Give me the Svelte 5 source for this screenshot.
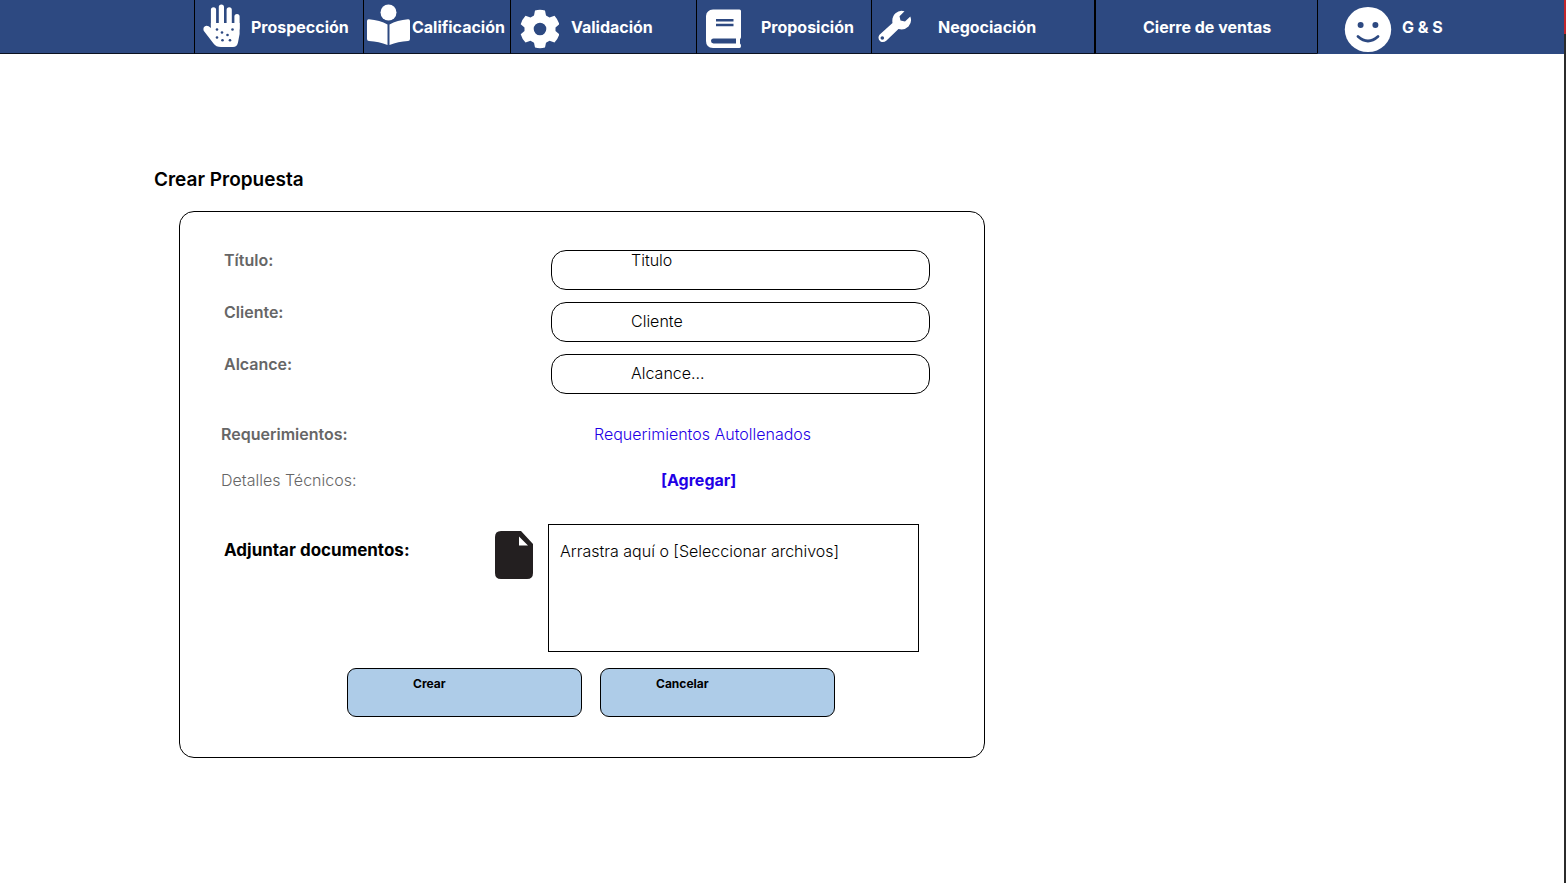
<script>
  const steps = [
    { id: 'prospeccion', label: 'Prospección', icon: 'hand', width: 46 },
    { id: 'calificacion', label: 'Calificación', icon: 'reader', width: 48 },
    { id: 'validacion', label: 'Validación', icon: 'gear', width: 48 },
    { id: 'proposicion', label: 'Proposición', icon: 'book', width: 44 },
    { id: 'negociacion', label: 'Negociación', icon: 'wrench', width: 40 },
    { id: 'cierre', label: 'Cierre de ventas', icon: null, width: 0 },
    { id: 'perfil', label: 'G & S', icon: 'smile', width: 74 }
  ];

  let titulo = $state('');
  let cliente = $state('');
  let alcance = $state('');
</script>

<div class="page">
  <div class="content">
    <nav>
      {#each steps as step}
        <a class={step.id} href="#{step.id}">
          {#if step.icon}
            <svg width={step.width} height="53" viewBox="0 0 {step.width} 53" aria-hidden="true">
              {#if step.icon === 'hand'}
                <g fill="none" stroke="#fff" stroke-width="5.2" stroke-linecap="round">
                  <path d="M18.500 26V9.800M26.400 26V7M34.200 26V9.800M42 28V16.500" />
                </g>
                <path fill="#fff" d="M15.900 23H44.600V34L43 42.500Q42 47 38 47H26Q21 47 18.500 43.500L8.700 30.800Q7.600 27.300 10.500 26Q13 25.300 15.900 28Z" />
                <g fill="#2d4981">
                  <circle cx="22" cy="29.500" r="1.300" /><circle cx="37.500" cy="29.500" r="1.300" />
                  <circle cx="27" cy="32.500" r="1.300" /><circle cx="32.500" cy="35" r="1.300" />
                  <circle cx="22" cy="37.500" r="1.300" /><circle cx="27.500" cy="40.300" r="1.300" />
                  <circle cx="35" cy="40.300" r="1.300" />
                </g>
              {:else if step.icon === 'reader'}
                <g fill="#fff" transform="translate(-1 0)">
                  <circle cx="25.500" cy="12.500" r="8" />
                  <path d="M4 21Q4 19 6 19.200Q17 20 24.500 24.500V45Q16 41.500 6 41Q4 40.800 4 39Z" />
                  <path d="M47 21Q47 19 45 19.200Q34 20 26.500 24.500V45Q35 41.500 45 41Q47 40.800 47 39Z" />
                </g>
              {:else if step.icon === 'gear'}
                <g transform="translate(29 29)" fill="#fff">
                  <path fill-rule="evenodd" d="M-5-18.500Q0-19.800 5-18.500L6-13.500L9.500-11.500L14.500-13.300Q18-9.500 19.300-4.800L15.500-1.500V2L19.300 5.300Q18 10 14.500 13.500L9.500 11.800L6 13.800L5 18.600Q0 19.900-5 18.600L-6 13.800L-9.500 11.800L-14.500 13.500Q-18 10-19.300 5.300L-15.500 2V-1.500L-19.300-4.800Q-18-9.500-14.500-13.300L-9.500-11.500L-6-13.500ZM0-6.300A6.300 6.300 0 1 0 0 6.300A6.300 6.300 0 1 0 0-6.300Z" />
                </g>
              {:else if step.icon === 'book'}
                <path fill="#fff" fill-rule="evenodd" d="M16 9.500H42.500Q44 9.500 44 11V37Q44 38.500 43 39V43.500Q44 44 44 46Q44 48 42.500 48H16Q9 47.500 9 41V16Q9.500 10 16 9.500ZM19 19V21.500H36.500V19ZM19 23.800V26.300H36.500V23.800ZM16.500 38.500A2.400 2.400 0 0 0 16.500 43.500H39V38.500Z" />
              {:else if step.icon === 'wrench'}
                <path fill="#fff" fill-rule="evenodd" d="M32.500 11.200L27.500 16.200L28.500 20.500L33 21.500L38.300 16.500Q40.500 22 36.500 26.500Q32.500 30.500 26.500 29L14.500 40.500Q11.500 43 8.500 41.500Q5 38.500 7.500 34.800L20.500 23Q19.500 17 23.500 13.200Q27.500 9.500 32.500 11.200ZM10.300 36.200A1.800 1.800 0 1 0 10.300 39.800A1.800 1.800 0 1 0 10.300 36.200Z" />
              {:else}
                <ellipse cx="50" cy="29.500" rx="23.200" ry="22.600" fill="#fff" />
                <circle cx="42.600" cy="25" r="3" fill="#2d4981" />
                <circle cx="57.400" cy="25" r="3" fill="#2d4981" />
                <path d="M40 36.500Q50 45.500 60 36.500" fill="none" stroke="#2d4981" stroke-width="2.800" stroke-linecap="round" />
              {/if}
            </svg>
          {/if}
          <span>{step.label}</span>
        </a>
      {/each}
    </nav>

    <main>
      <h1>Crear Propuesta</h1>
      <form>
        <div class="fields">
          <label for="titulo">Título:</label>
          <input id="titulo" class="raised" type="text" placeholder="Titulo" bind:value={titulo} />
          <label for="cliente">Cliente:</label>
          <input id="cliente" type="text" placeholder="Cliente" bind:value={cliente} />
          <label for="alcance">Alcance:</label>
          <input id="alcance" type="text" placeholder="Alcance..." bind:value={alcance} />
        </div>

        <dl>
          <dt class="strong">Requerimientos:</dt>
          <dd><a href="#requerimientos">Requerimientos Autollenados</a></dd>
          <dt>Detalles Técnicos:</dt>
          <dd><button type="button" class="add">[Agregar]</button></dd>
        </dl>

        <div class="attach">
          <h2>Adjuntar documentos:</h2>
          <svg width="38" height="48" viewBox="0 0 38 48" aria-hidden="true">
            <path fill="#231f20" fill-rule="evenodd" d="M6 0H26L38 13V42Q38 48 32 48H6Q0 48 0 42V6Q0 0 6 0ZM24 5.500V14.500H33Z" />
          </svg>
          <button type="button" class="drop">Arrastra aquí o [Seleccionar archivos]</button>
        </div>

        <div class="actions">
          <button type="button" class="create">Crear</button>
          <button type="button" class="cancel">Cancelar</button>
        </div>
      </form>
    </main>
  </div>
  <div class="edge"></div>
</div>

<style>
  :global(body) {
    margin: 0;
    background: #fff;
  }

  .page {
    display: flex;
    min-height: 100vh;
    font-family: Inter, sans-serif;
    font-size: 16px;
    line-height: 20px;
    color: #000;
  }

  .content {
    flex: 1;
    min-width: 0;
  }

  .edge {
    width: 2px;
    background: linear-gradient(#c1272d 34px, #2b2b2b 34px);
  }

  nav {
    display: grid;
    grid-template-columns: 169fr 147fr 186fr 175fr 223fr 223fr 247fr;
    padding-left: 12.4%;
    background: linear-gradient(#2d4981 53px, #0b1220 53px);
  }

  nav a {
    display: flex;
    align-items: center;
    box-sizing: border-box;
    height: 54px;
    border-left: 1px solid #000;
    border-bottom: 1px solid #0b1220;
    color: #fff;
    font-weight: 700;
    text-decoration: none;
    white-space: nowrap;
  }

  nav svg {
    flex: none;
  }

  .prospeccion {
    gap: 10px;
  }

  .calificacion {
    gap: 0;
  }

  .validacion {
    gap: 12px;
  }

  .proposicion {
    gap: 20px;
  }

  .negociacion {
    gap: 26px;
  }

  .cierre {
    padding-left: 47px;
    border-left-width: 2px;
  }

  .perfil {
    gap: 10px;
    border-bottom-color: #2d4981;
  }

  main {
    padding: 114px 24px 0 154px;
  }

  h1 {
    margin: 0;
    font-size: 19px;
    line-height: 24px;
    font-weight: 600;
  }

  form {
    box-sizing: border-box;
    max-width: 806px;
    margin: 19px 0 24px 25px;
    padding: 38px 54px 40px 44px;
    border: 1px solid #000;
    border-radius: 15px;
  }

  .fields {
    display: grid;
    grid-template-columns: 327px 1fr;
    row-gap: 12px;
  }

  label {
    color: #666;
    font-weight: 600;
  }

  input {
    box-sizing: border-box;
    width: 100%;
    height: 40px;
    padding: 0 16px 2px 79px;
    border: 1px solid #000;
    border-radius: 15px;
    background: #fff;
    color: #000;
    font: inherit;
    font-weight: 300;
  }

  .raised {
    padding-bottom: 20px;
  }

  input::placeholder {
    color: #000;
    opacity: 1;
  }

  dl {
    display: grid;
    grid-template-columns: 330px 1fr;
    row-gap: 26px;
    margin: 30px 0 0 -3px;
    font-weight: 300;
  }

  dt {
    color: #666;
  }

  .strong {
    font-weight: 600;
  }

  dd {
    margin: 0 0 0 43px;
  }

  dd a {
    color: #1f00e6;
    text-decoration: none;
  }

  button {
    font-family: inherit;
    color: #000;
  }

  .add {
    margin-left: 67px;
    padding: 0;
    border: 0;
    background: none;
    color: #1f00e6;
    font-size: 16px;
    line-height: 20px;
    font-weight: 700;
  }

  .attach {
    display: flex;
    align-items: flex-start;
    margin: 34px 11px 0 0;
  }

  h2 {
    width: 271px;
    margin: 16px 0 0;
    font-size: 17px;
    line-height: 20px;
    font-weight: 700;
  }

  .attach svg {
    flex: none;
    margin: 7px 15px 0 0;
  }

  .drop {
    display: flex;
    align-items: flex-start;
    flex: 1;
    height: 128px;
    padding: 16px 11px;
    border: 1px solid #000;
    background: #fff;
    font-size: 16px;
    line-height: 20px;
    font-weight: 300;
  }

  .actions {
    display: flex;
    gap: 18px;
    margin: 16px 0 0 123px;
  }

  .actions button {
    display: flex;
    align-items: flex-start;
    width: 235px;
    height: 49px;
    padding-top: 7px;
    border: 1px solid #000;
    border-radius: 9px;
    background: #aecce8;
    font-size: 12px;
    line-height: 16px;
    font-weight: 700;
  }

  .create {
    padding-left: 65px;
  }

  .cancel {
    padding-left: 55px;
  }
</style>
